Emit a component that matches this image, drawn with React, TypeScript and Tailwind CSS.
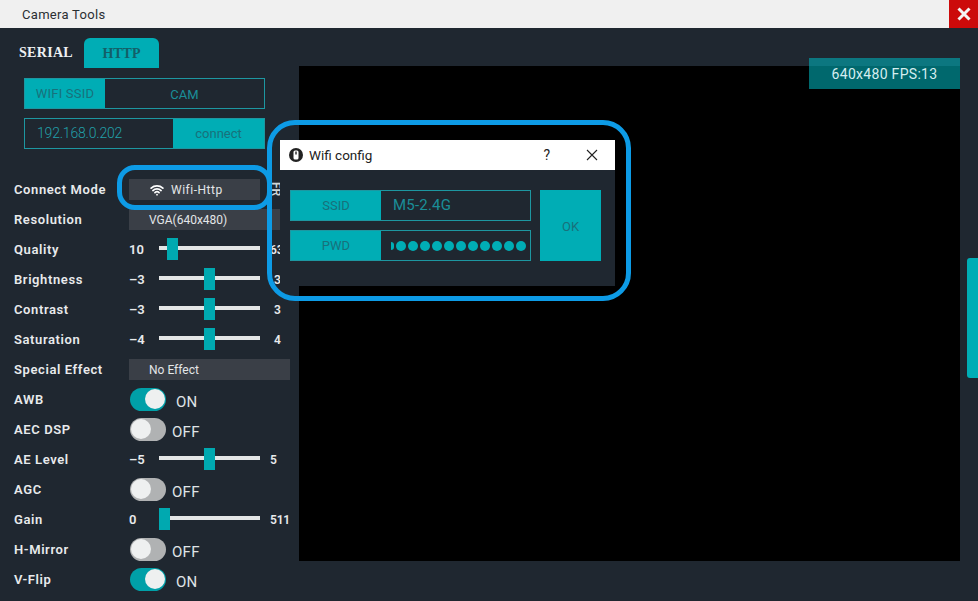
import { Wifi } from "lucide-react";

const ui = "font-['Roboto',sans-serif]";

function Label({ children }: { children: string }) {
  return <span className="w-[115px] shrink-0 pt-[1px] text-[13px] font-semibold tracking-[0.6px] text-[#e8eaec]">{children}</span>;
}

function Row({ children }: { children: React.ReactNode }) {
  return <div className="flex h-[30px] items-center pl-[14px]">{children}</div>;
}

function Slider({ label, min, max, pos, inset }: { label: string; min: string; max: string; pos: number; inset?: boolean }) {
  return (
    <Row>
      <Label>{label}</Label>
      <span className="w-[30px] shrink-0 pt-[1px] text-[13px] font-semibold text-[#e8eaec]">{min}</span>
      <div className="relative mt-[-2px] h-[4px] w-[101px] shrink-0 bg-[#e3e6e6]">
        <div className="absolute top-[-8px] h-[22px] w-[11px] bg-[#00a9b0]" style={{ left: pos }} />
      </div>
      <span className={`pt-[1px] text-[12px] font-semibold tracking-[-0.2px] text-[#e8eaec] ${inset ? "ml-[14px]" : "ml-[10px]"}`}>{max}</span>
    </Row>
  );
}

function Toggle({ label, on }: { label: string; on: boolean }) {
  return (
    <Row>
      <Label>{label}</Label>
      <div className={`ml-[1px] flex h-[23px] w-[36px] items-center rounded-full px-[1px] ${on ? "justify-end bg-[#00a0a8]" : "justify-start bg-[#b0b2b3]"}`}>
        <div className="h-[20px] w-[20px] rounded-full bg-[#eef0f0]" />
      </div>
      <span className={`mt-[7px] text-[15px] tracking-[0.3px] text-[#dfe3e6] ${on ? "ml-[10px]" : "ml-[6px]"}`}>{on ? "ON" : "OFF"}</span>
    </Row>
  );
}

function Select({ label, children }: { label: string; children: React.ReactNode }) {
  return (
    <Row>
      <Label>{label}</Label>
      <div className="flex h-[21px] w-[161px] items-center bg-[#3a3f47] pl-[20px] pt-[1px] text-[12px] text-[#e3e6e8]">{children}</div>
    </Row>
  );
}

function Field({ label, children }: { label: string; children: React.ReactNode }) {
  return (
    <div className="flex h-[31px] border border-[#1d97a1]">
      <div className="flex w-[90px] items-center justify-center bg-[#00adb5] pt-[1px] text-[13px] text-[#18717b]">{label}</div>
      <div className="flex min-w-0 flex-1 items-center overflow-hidden pl-[12px] text-[15px] tracking-[0.2px] text-[#1a8e98]">{children}</div>
    </div>
  );
}

export default function App() {
  return (
    <div className={`${ui} relative flex h-[601px] w-[978px] flex-col overflow-hidden bg-[#1f2730]`}>
      {/* title bar */}
      <div className="flex h-[28px] shrink-0 items-center justify-between bg-[#f0f0f0] pl-[22px]">
        <span className="pt-[1px] text-[13px] tracking-[0.3px] text-[#2b2f33]">Camera Tools</span>
        <div className="flex h-[28px] w-[29px] items-center justify-center bg-[#cc0a0a]">
          <svg width="14" height="14" viewBox="0 0 14 14">
            <path d="M1.5 1.5 12.5 12.5M12.5 1.5 1.5 12.5" stroke="#f4f4f4" strokeWidth="3" />
          </svg>
        </div>
      </div>

      <div className="flex min-h-0 flex-1">
        {/* left panel */}
        <div className="w-[299px] shrink-0">
          <div className="flex items-end pl-[19px] pt-[10px] font-['Liberation_Serif',serif] text-[14px] font-bold">
            <span className="pb-[5px] tracking-[0.3px] text-[#eef0f2]">SERIAL</span>
            <span className="ml-[11px] flex h-[30px] w-[75px] items-center justify-center rounded-t-[6px] bg-[#00adb5] text-[#135f68]">HTTP</span>
          </div>

          <div className="flex flex-col gap-[9px] pl-[24px] pt-[10px]">
            <div className="flex h-[31px] w-[241px] border border-[#1d97a1] text-[13px]">
              <div className="flex w-[80px] items-center justify-center bg-[#00adb5] pt-[1px] tracking-[0.2px] text-[#18717b]">WIFI SSID</div>
              <div className="flex flex-1 items-center justify-center pt-[2px] text-[#1a8e98]">CAM</div>
            </div>
            <div className="flex h-[31px] w-[241px] border border-[#1d97a1]">
              <div className="flex flex-1 items-center pl-[12px] text-[14px] font-light tracking-[-0.2px] text-[#22a0aa]">192.168.0.202</div>
              <div className="flex w-[91px] items-center justify-center bg-[#00adb5] pt-[1px] text-[13px] text-[#18717b]">connect</div>
            </div>
          </div>

          <div className="pt-[25px]">
            <Row>
              <Label>Connect Mode</Label>
              <div className="flex h-[21px] w-[131px] items-center bg-[#3a3f47] pl-[20px] pt-[1px] text-[12px] tracking-[0.5px] text-[#e3e6e8]">
                <Wifi size={14} strokeWidth={3} className="ml-[1px] mr-[7px] text-white" />
                Wifi-Http
              </div>
              <span className="ml-[9px] rotate-90 text-[12px] font-semibold leading-none text-[#cfd6d8]">FR</span>
            </Row>
            <Select label="Resolution">VGA(640x480)</Select>
            <Slider label="Quality" min="10" max="63" pos={8} />
            <Slider label="Brightness" min="–3" max="3" pos={45} inset />
            <Slider label="Contrast" min="–3" max="3" pos={45} inset />
            <Slider label="Saturation" min="–4" max="4" pos={45} inset />
            <Select label="Special Effect">No Effect</Select>
            <Toggle label="AWB" on />
            <Toggle label="AEC DSP" on={false} />
            <Slider label="AE Level" min="–5" max="5" pos={45} />
            <Toggle label="AGC" on={false} />
            <Slider label="Gain" min="0" max="511" pos={0} />
            <Toggle label="H-Mirror" on={false} />
            <Toggle label="V-Flip" on />
          </div>
        </div>

        {/* video */}
        <div className="pb-[40px] pt-[38px]">
          <div className="flex h-full w-[661px] justify-end bg-black">
            <div className="mt-[-8px] flex h-[31px] w-[151px] items-center justify-center bg-[#00adb5]/60 pt-[2px] text-[14px] tracking-[0.3px] text-[#d5eef0]">
              640x480 FPS:13
            </div>
          </div>
        </div>

        <div className="pl-[7px] pt-[230px]">
          <div className="h-[120px] w-[11px] rounded-l-[3px] bg-[#00adb5]" />
        </div>
      </div>

      {/* highlight ring on connect mode */}
      <div className="absolute left-[117px] top-[165px] h-[45px] w-[155px] rounded-[18px] border-[5px] border-[#0d9be6]" />

      {/* wifi dialog over the page */}
      <div className="absolute left-[280px] top-[140px] h-[146px] w-[335px] bg-[#1f2730]">
        <div className="flex h-[30px] items-center bg-white pl-[9px] text-[13.5px] text-[#222]">
          <svg width="14" height="14" viewBox="0 0 14 14" className="mr-[6px]">
            <circle cx="7" cy="7" r="7" fill="#222" />
            <rect x="4.5" y="2.5" width="5" height="9" rx="1.5" fill="#fff" />
            <rect x="6.3" y="3.5" width="1.4" height="3" fill="#222" />
          </svg>
          Wifi config
          <span className="ml-auto mr-[36px] text-[14px]">?</span>
          <svg width="12" height="12" viewBox="0 0 12 12" className="mr-[17px]">
            <path d="M1 1 11 11M11 1 1 11" stroke="#222" strokeWidth="1.1" />
          </svg>
        </div>
        <div className="flex gap-[9px] pl-[10px] pt-[20px]">
          <div className="flex w-[241px] flex-col gap-[9px]">
            <Field label="SSID">M5-2.4G</Field>
            <Field label="PWD">
              <span className="ml-[-2px] flex items-center gap-[2px]">
                <span className="h-[8px] w-[3px] rounded-r-full bg-[#00adb5]" />
                {Array.from({ length: 11 }).map((_, i) => (
                  <span key={i} className="h-[10px] w-[10px] rounded-full bg-[#00adb5]" />
                ))}
              </span>
            </Field>
          </div>
          <div className="flex h-[71px] w-[61px] items-center justify-center bg-[#00adb5] pt-[2px] text-[13px] text-[#18717b]">OK</div>
        </div>
      </div>
      <div className="absolute left-[267px] top-[120px] h-[181px] w-[364px] rounded-[28px] border-[5px] border-[#0d9be6]" />
    </div>
  );
}
